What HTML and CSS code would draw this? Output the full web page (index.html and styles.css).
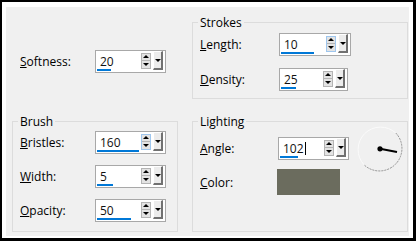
FILE: index.html
```html
<!DOCTYPE html>
<html lang="en">
<head>
    <meta charset="UTF-8">
    <title>Brush Strokes</title>
    <link rel="stylesheet" href="styles.css">
</head>
<body>

<div class="frame">
    <div class="panel">

        <div class="softness">
            <div class="row">
                <label class="label"><u>S</u>oftness:</label>
                <div class="spin">
                    <div class="field">
                        <span class="value">20</span>
                        <span class="level" style="width: 14px"></span>
                    </div>
                    <div class="arrows"><span class="up"></span><span class="down"></span></div>
                    <div class="drop"></div>
                </div>
            </div>
        </div>

        <fieldset class="group strokes">
            <legend>Strokes</legend>
            <div class="row">
                <label class="label"><u>L</u>ength:</label>
                <div class="spin wide">
                    <div class="field">
                        <span class="value">10</span>
                        <span class="level" style="width: 33px"></span>
                    </div>
                    <div class="arrows hot"><span class="up"></span><span class="down"></span></div>
                    <div class="drop"></div>
                </div>
            </div>
            <div class="row">
                <label class="label"><u>D</u>ensity:</label>
                <div class="spin narrow">
                    <div class="field">
                        <span class="value">25</span>
                        <span class="level" style="width: 15px"></span>
                    </div>
                    <div class="arrows"><span class="up"></span><span class="down"></span></div>
                    <div class="drop"></div>
                </div>
            </div>
        </fieldset>

        <fieldset class="group brush">
            <legend>Brush</legend>
            <div class="row">
                <label class="label"><u>B</u>ristles:</label>
                <div class="spin">
                    <div class="field">
                        <span class="value">160</span>
                        <span class="level" style="width: 42px"></span>
                    </div>
                    <div class="arrows hot"><span class="up"></span><span class="down"></span></div>
                    <div class="drop"></div>
                </div>
            </div>
            <div class="row">
                <label class="label"><u>W</u>idth:</label>
                <div class="spin">
                    <div class="field">
                        <span class="value">5</span>
                        <span class="level" style="width: 16px"></span>
                    </div>
                    <div class="arrows"><span class="up"></span><span class="down"></span></div>
                    <div class="drop"></div>
                </div>
            </div>
            <div class="row">
                <label class="label"><u>O</u>pacity:</label>
                <div class="spin">
                    <div class="field">
                        <span class="value">50</span>
                        <span class="level" style="width: 34px"></span>
                    </div>
                    <div class="arrows"><span class="up"></span><span class="down"></span></div>
                    <div class="drop"></div>
                </div>
            </div>
        </fieldset>

        <fieldset class="group lighting">
            <legend>Lighting</legend>
            <div class="row">
                <label class="label"><u>A</u>ngle:</label>
                <div class="spin">
                    <div class="field">
                        <span class="value">102<span class="caret"></span></span>
                        <span class="level" style="width: 18px"></span>
                    </div>
                    <div class="arrows"><span class="up"></span><span class="down"></span></div>
                    <div class="drop"></div>
                </div>
                <svg class="dial" width="46" height="46" viewBox="0 0 46 46">
                    <path d="M7.1 38.9 A22.5 22.5 0 0 1 38.9 7.1" fill="none" stroke="#fbfbfb"/>
                    <path d="M38.9 7.1 A22.5 22.5 0 0 1 7.1 38.9" fill="none" stroke="#8e8e8e" stroke-dasharray="2 1"/>
                    <line x1="23" y1="22.8" x2="40" y2="26" stroke="#000" stroke-width="2"/>
                    <circle cx="23" cy="22.8" r="2.6" fill="#000"/>
                </svg>
            </div>
            <div class="row color-row">
                <label class="label"><u>C</u>olor:</label>
                <div class="swatch"></div>
            </div>
        </fieldset>

    </div>
</div>

</body>
</html>
```

FILE: styles.css
```css
body {
    margin: 0;
    font-family: 'Open Sans', 'Liberation Sans', sans-serif;
    font-size: 12px;
    line-height: 15px;
    color: #000;
}

.frame {
    width: 416px;
    height: 241px;
    box-sizing: border-box;
    border-style: solid;
    border-color: #000;
    border-width: 2px 3px 3px 2px;
    padding: 5px 4px 2px 4px;
    background-color: #fff;
}

.panel {
    height: 100%;
    box-sizing: border-box;
    background-color: #f0f0f0;
    padding: 8px 1px 4px 6px;
    display: grid;
    grid-template-columns: 166px 216px;
    grid-template-rows: 84px 118px;
    column-gap: 14px;
    row-gap: 15px;
}

/* Group boxes */
.group {
    margin: 0;
    min-width: 0;
    border: 1px solid #dcdcdc;
    padding: 0 0 0 7px;
    display: flex;
    flex-direction: column;
}

.group legend {
    padding: 0 2px;
    margin-left: -2px;
    line-height: 15px;
}

.softness {
    padding: 35px 0 0 8px;
}

.strokes {
    padding-top: 3px;
    gap: 12px;
}

.brush {
    padding-top: 2px;
    gap: 11px;
}

.lighting {
    padding-top: 8px;
    gap: 9px;
}

.row {
    display: flex;
    align-items: center;
    height: 23px;
}

.label {
    width: 75px;
    flex-shrink: 0;
}

.strokes .label {
    width: 79px;
}

.lighting .label {
    width: 78px;
}

/* Spin boxes */
.spin {
    display: flex;
    align-items: center;
    width: 71px;
    height: 23px;
    box-sizing: border-box;
    border: 1px solid #a8a8a8;
    background-color: #fff;
    padding-right: 2px;
}

.spin.wide {
    width: 72px;
}

.spin.narrow {
    width: 69px;
}

.field {
    flex: 1;
    align-self: stretch;
    display: flex;
    flex-direction: column;
    padding-left: 1px;
}

.value {
    padding: 3px 0 0 3px;
    color: #111;
}

.caret {
    display: inline-block;
    width: 1px;
    height: 13px;
    margin-left: 1px;
    vertical-align: -2px;
    background-color: #000;
}

.level {
    display: block;
    height: 2px;
    margin-top: auto;
    margin-bottom: 1px;
    background-color: #0078d7;
}

.arrows {
    width: 10px;
    height: 16px;
    box-sizing: border-box;
    border: 1px solid #b4b4b4;
    background-color: #e3e3e3;
    display: flex;
    flex-direction: column;
    margin-top: -2px;
}

.arrows.hot {
    border-color: #9ec6ee;
}

.arrows span {
    flex: 1;
    display: flex;
    align-items: center;
    justify-content: center;
}

.arrows .up {
    border-bottom: 1px solid #b4b4b4;
}

.arrows .up::before,
.arrows .down::before,
.drop::before {
    content: '';
    border-left: 3px solid transparent;
    border-right: 3px solid transparent;
}

.arrows .up::before {
    border-bottom: 3px solid #000;
}

.arrows .down::before,
.drop::before {
    border-top: 3px solid #000;
}

.drop {
    width: 10px;
    height: 19px;
    box-sizing: border-box;
    margin-left: 2px;
    margin-top: -2px;
    border-style: solid;
    border-width: 1px 2px 2px 1px;
    border-color: #fff #717171 #717171 #fff;
    background-color: #ececec;
    display: flex;
    align-items: center;
    justify-content: center;
}

/* Lighting */
.dial {
    flex-shrink: 0;
    margin-left: 8px;
}

.color-row {
    height: 26px;
}

.swatch {
    width: 63px;
    height: 26px;
    margin-left: -1px;
    background-color: #6b6c5e;
}
```
